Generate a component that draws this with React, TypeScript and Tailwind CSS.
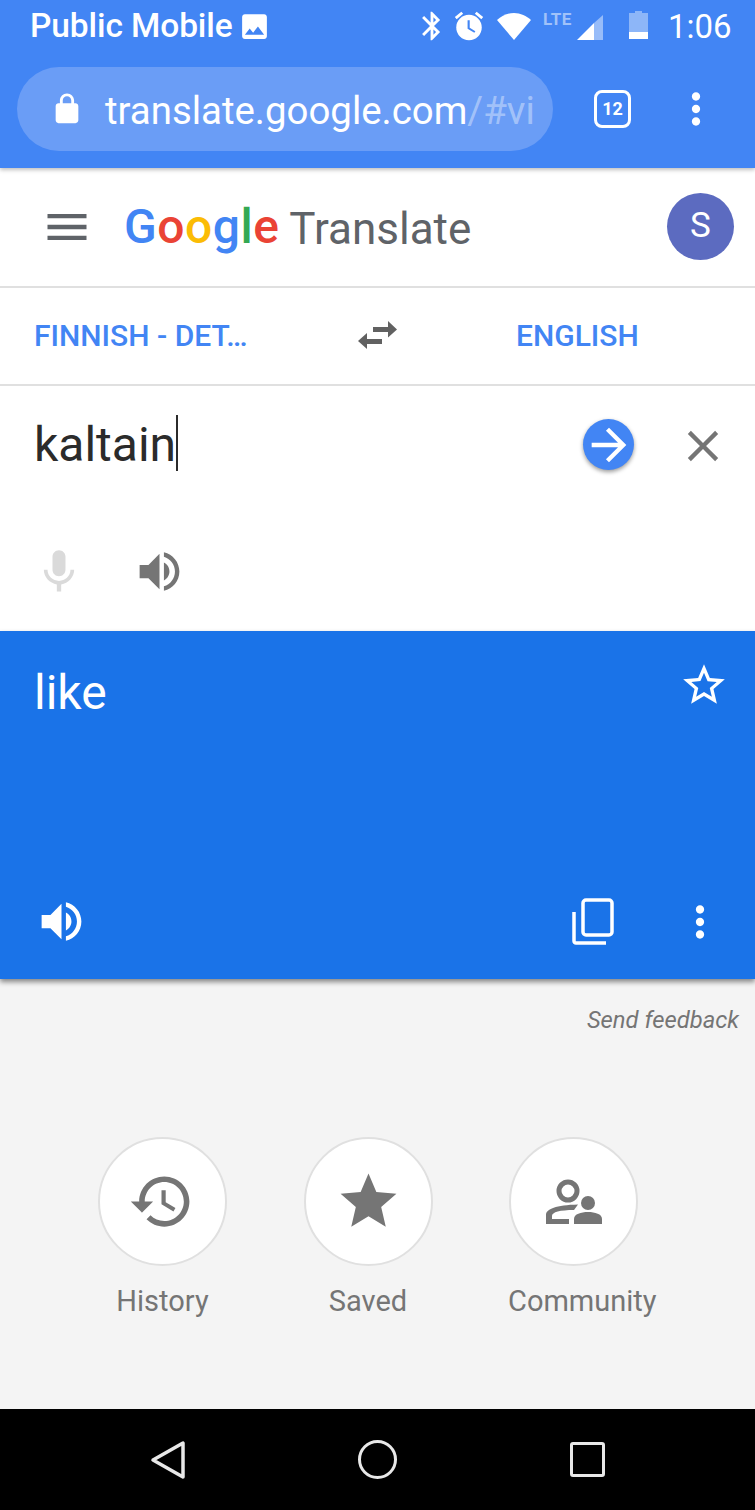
import React from 'react';

const font = { fontFamily: 'Roboto, sans-serif' };

function Icon({ d, className }: { d: string; className: string }) {
  return (
    <svg viewBox="0 0 24 24" className={className} fill="currentColor">
      <path d={d} />
    </svg>
  );
}

const VOLUME = 'M3 9v6h4l5 5V4L7 9H3zm13.5 3c0-1.77-1.02-3.29-2.5-4.03v8.05c1.48-.73 2.5-2.25 2.5-4.02zM14 3.23v2.06c2.89.86 5 3.54 5 6.71s-2.11 5.85-5 6.71v2.06c4.01-.91 7-4.49 7-8.77s-2.99-7.86-7-8.77z';
const DOTS = 'M12 8c1.1 0 2-.9 2-2s-.9-2-2-2-2 .9-2 2 .9 2 2 2zm0 2c-1.1 0-2 .9-2 2s.9 2 2 2 2-.9 2-2-.9-2-2-2zm0 6c-1.1 0-2 .9-2 2s.9 2 2 2 2-.9 2-2-.9-2-2-2z';

function StatusBar() {
  return (
    <div className="h-[52px] flex items-center pl-[30px] pr-[22px] text-white">
      <span className="text-[33.5px] font-medium leading-none tracking-[-0.1px]">Public Mobile</span>
      <Icon className="w-[33px] h-[33px] ml-[5px]" d="M21 19V5c0-1.1-.9-2-2-2H5c-1.1 0-2 .9-2 2v14c0 1.1.9 2 2 2h14c1.1 0 2-.9 2-2zM8.5 13.5l2.5 3.01L14.5 12l4.5 6H5l3.5-4.5z" />
      <div className="flex-1" />
      <Icon className="w-[34px] h-[34px]" d="M17.71 7.71L12 2h-1v7.59L6.41 5 5 6.41 10.59 12 5 17.59 6.41 19 11 14.41V22h1l5.71-5.71-4.3-4.29 4.3-4.29zM13 5.83l1.88 1.88L13 9.59V5.83zm1.88 10.46L13 18.17v-3.76l1.88 1.88z" />
      <svg viewBox="0 0 24 24" className="w-[34px] h-[34px] ml-[3px]" fill="currentColor">
        <path d="M22 5.72l-4.6-3.86-1.29 1.53 4.6 3.86L22 5.72zM7.88 3.39L6.6 1.86 2 5.71l1.29 1.53 4.59-3.85z" />
        <circle cx="12" cy="13" r="9" />
        <path d="M12.5 8H11v6l4.75 2.85.75-1.23-4-2.37V8z" fill="#4285f4" />
      </svg>
      <svg viewBox="0 0 34 27" className="w-[34px] h-[27px] ml-[11px]" fill="currentColor">
        <path d="M17 27L0 7C4.5 3 10.5 0 17 0s12.500 3 17 7z" />
      </svg>
      <div className="relative w-[60px] h-[30px] ml-[12px]">
        <span className="absolute left-0 top-0 text-[17px] font-bold leading-none tracking-[0.5px] text-white/50">LTE</span>
        <svg viewBox="0 0 26 25" className="absolute left-[34px] top-[4px] w-[26px] h-[25px]" fill="currentColor">
          <path d="M0 25L17 8v17z" />
          <path d="M17 8L26 0v25h-9z" fillOpacity="0.45" />
        </svg>
      </div>
      <svg viewBox="0 0 19 28" className="w-[19px] h-[28px] ml-[26px] mt-[-2px]" fill="currentColor">
        <path d="M6 0h7v2h6v26H0V2h6z" fillOpacity="0.4" />
        <path d="M0 21h19v7H0z" />
      </svg>
      <span className="text-[33px] leading-none ml-[20px] w-[65px]">1:06</span>
    </div>
  );
}

function Toolbar() {
  return (
    <div className="h-[116px] flex items-start pl-[17px] text-white">
      <div className="w-[536px] h-[84px] mt-[15px] rounded-full bg-[#6a9df6] flex items-center pl-[38px]">
        <Icon className="w-[34px] h-[34px] mt-[-1px] ml-[-5px]" d="M18 8h-1V6c0-2.760-2.240-5-5-5S7 3.240 7 6v2H6c-1.100 0-2 .9-2 2v10c0 1.100.9 2 2 2h12c1.100 0 2-.9 2-2V10c0-1.100-.9-2-2-2zM9 6c0-1.660 1.340-3 3-3s3 1.340 3 3v2H9V6z" />
        <span className="text-[38.4px] leading-none ml-[21px] mt-[5px] whitespace-nowrap">
          translate.google.com<span className="text-white/40">/#vi</span>
        </span>
      </div>
      <div className="w-[37px] h-[38px] ml-[41px] mt-[38px] rounded-[8px] border-[3.5px] border-white flex items-center justify-center text-[18px] font-bold leading-none">12</div>
      <Icon className="w-[50px] h-[50px] ml-[40px] mt-[32px]" d={DOTS} />
    </div>
  );
}

function AppHeader() {
  return (
    <div className="h-[120px] shrink-0 flex items-center bg-white border-b-2 border-[#e0e0e0] pl-[41px] pr-[21px]">
      <Icon className="w-[52px] h-[52px] text-[#5f6368]" d="M3 18h18v-2H3v2zm0-5h18v-2H3v2zm0-7v2h18V6H3z" />
      <span className="ml-[31px] text-[48px] font-medium leading-none tracking-[0.5px]">
        <span className="text-[#4285f4]">G</span>
        <span className="text-[#ea4335]">o</span>
        <span className="text-[#fbbc05]">o</span>
        <span className="text-[#4285f4]">g</span>
        <span className="text-[#34a853]">l</span>
        <span className="text-[#ea4335]">e</span>
      </span>
      <span className="ml-[10px] mt-[3px] text-[44px] leading-none text-[#5f6368]">Translate</span>
      <div className="flex-1" />
      <div className="w-[67px] h-[67px] mt-[-2px] rounded-full bg-[#5c6bc0] text-white text-[35px] flex items-center justify-center">S</div>
    </div>
  );
}

function LanguageRow() {
  return (
    <div className="h-[98px] shrink-0 flex items-center bg-white border-b-2 border-[#e0e0e0] text-[#4285f4] text-[30px] font-medium leading-none">
      <span className="ml-[34px] w-[214px] whitespace-nowrap">FINNISH - DET…</span>
      <svg viewBox="0 0 39 28" className="w-[39px] h-[28px] ml-[110px] mt-[-2px]" fill="#616161">
        <path d="M15 6h15V0l9 8.500-9 8v-5.500H15zM24 18H9v-6l-9 8 9 8v-5h15z" />
      </svg>
      <span className="ml-[119px]">ENGLISH</span>
    </div>
  );
}

function InputPanel() {
  return (
    <div className="h-[245px] shrink-0 bg-white flex flex-col">
      <div className="h-[118px] flex items-start pl-[34px] pt-[29px]">
        <span className="h-[56px] pt-[4px] text-[48px] leading-[52px] text-[#2b2b2b] border-r-2 border-[#2b2b2b]">kaltain</span>
        <div className="flex-1" />
        <div className="w-[51px] h-[51px] mt-[4px] rounded-full bg-[#4285f4] shadow-[0_2px_4px_rgba(0,0,0,0.4)] flex items-center justify-center text-white">
          <Icon className="w-[52px] h-[52px] shrink-0" d="M12 4l-1.410 1.410L16.170 11H4v2h12.170l-5.580 5.590L12 20l8-8z" />
        </div>
        <Icon className="w-[52px] h-[52px] ml-[43px] mr-[26px] mt-[5px] text-[#757575]" d="M19 6.410L17.590 5 12 10.590 6.410 5 5 6.410 10.590 12 5 17.590 6.410 19 12 13.410 17.590 19 19 17.590 13.410 12z" />
      </div>
      <div className="flex items-center pl-[33px] mt-[41px]">
        <Icon className="w-[52px] h-[52px] text-[#dadada]" d="M12 14c1.660 0 2.990-1.340 2.990-3L15 5c0-1.660-1.340-3-3-3S9 3.340 9 5v6c0 1.660 1.340 3 3 3zm5.300-3c0 3-2.540 5.100-5.300 5.100S6.700 14 6.700 11H5c0 3.410 2.720 6.230 6 6.720V21h2v-3.280c3.280-.48 6-3.300 6-6.720h-1.700z" />
        <Icon className="w-[53px] h-[53px] ml-[48px] text-[#757575]" d={VOLUME} />
      </div>
    </div>
  );
}

function ResultPanel() {
  return (
    <div className="relative z-10 h-[348px] shrink-0 bg-[#1a73e8] text-white flex flex-col shadow-[0_3px_5px_rgba(0,0,0,0.45)]">
      <div className="flex items-start pl-[34px] pr-[26px] pt-[32px]">
        <span className="text-[48px] leading-[60px]">like</span>
        <div className="flex-1" />
        <Icon className="w-[50px] h-[50px] mt-[-3px]" d="M22 9.240l-7.190-.620L12 2 9.190 8.630 2 9.240l5.460 4.730L5.820 21 12 17.270 18.180 21l-1.630-7.030L22 9.240zM12 15.400l-3.760 2.270 1-4.280-3.320-2.880 4.380-.380L12 6.100l1.710 4.040 4.380.380-3.320 2.880 1 4.280L12 15.400z" />
      </div>
      <div className="flex-1" />
      <div className="flex items-center pl-[35px] pr-[30px] pb-[31px]">
        <Icon className="w-[53px] h-[53px]" d={VOLUME} />
        <div className="flex-1" />
        <svg viewBox="0 0 42 47" className="w-[42px] h-[47px]" fill="none" stroke="currentColor" strokeWidth="3.500">
          <path d="M34 45H4a2 2 0 0 1-2-2V14" />
          <rect x="11" y="2" width="29" height="35" rx="3" />
        </svg>
        <Icon className="w-[50px] h-[50px] ml-[61px]" d={DOTS} />
      </div>
    </div>
  );
}

function Shortcut({ label, className, children }: { label: string; className: string; children: React.ReactNode }) {
  return (
    <div className="w-[129px] flex flex-col">
      <div className="w-[129px] h-[129px] rounded-full bg-white border-2 border-[#e0e0e0] flex items-center justify-center text-[#757575]">
        {children}
      </div>
      <span className={`mt-[16px] text-[29px] leading-[38px] text-[#757575] whitespace-nowrap ${className}`}>{label}</span>
    </div>
  );
}

function Footer() {
  return (
    <div className="h-[430px] shrink-0 bg-[#f4f4f4] flex flex-col">
      <div className="h-[158px] pt-[26px] pr-[16px] text-right text-[23.8px] italic leading-[30px] text-[#757575]">Send feedback</div>
      <div className="flex pl-[98px] gap-[76.500px]">
        <Shortcut label="History" className="text-center">
          <Icon className="w-[67px] h-[67px] ml-[-2px]" d="M13 3c-4.970 0-9 4.030-9 9H1l3.890 3.890.070.140L9 12H6c0-3.870 3.130-7 7-7s7 3.130 7 7-3.130 7-7 7c-1.930 0-3.680-.790-4.940-2.060l-1.420 1.420C8.270 19.990 10.510 21 13 21c4.970 0 9-4.030 9-9s-4.030-9-9-9zm-1 5v5l4.280 2.540.720-1.210-3.500-2.080V8H12z" />
        </Shortcut>
        <Shortcut label="Saved" className="text-center">
          <Icon className="w-[67px] h-[67px]" d="M12 17.270L18.180 21l-1.640-7.030L22 9.240l-7.190-.610L12 2 9.190 8.630 2 9.240l5.460 4.730L5.820 21z" />
        </Shortcut>
        <Shortcut label="Community" className="ml-[-1px]">
          <svg viewBox="0 0 56 45" className="w-[56px] h-[45px]" fill="currentColor">
            <circle cx="22" cy="12" r="9" fill="none" stroke="currentColor" strokeWidth="5" />
            <path d="M0 45V36C0 30 10 26 32 25.500L28 31C14 31 6 33 6 37V40H23V45z" />
            <circle cx="42" cy="24" r="7" />
            <path d="M28 45V40C28 35 35 33 42 33S56 35 56 40V45z" />
          </svg>
        </Shortcut>
      </div>
    </div>
  );
}

function NavBar() {
  return (
    <div className="flex-1 bg-black flex items-center text-[#e8e8e8]">
      <svg viewBox="0 0 36 40" className="w-[36px] h-[40px] ml-[150px]" fill="none" stroke="currentColor" strokeWidth="3.500" strokeLinejoin="round">
        <path d="M33 3v34L3 20z" />
      </svg>
      <div className="w-[39px] h-[39px] ml-[172px] rounded-full border-[3.5px] border-[#e8e8e8]" />
      <div className="w-[35px] h-[35px] ml-[173px] rounded-[3px] border-[3.5px] border-[#e8e8e8]" />
    </div>
  );
}

export default function App() {
  return (
    <div className="w-[755px] h-[1510px] flex flex-col overflow-hidden bg-white" style={font}>
      <div className="relative z-10 h-[168px] shrink-0 bg-[#4285f4] shadow-[0_2px_4px_rgba(0,0,0,0.25)]">
        <StatusBar />
        <Toolbar />
      </div>
      <AppHeader />
      <LanguageRow />
      <InputPanel />
      <ResultPanel />
      <Footer />
      <NavBar />
    </div>
  );
}
